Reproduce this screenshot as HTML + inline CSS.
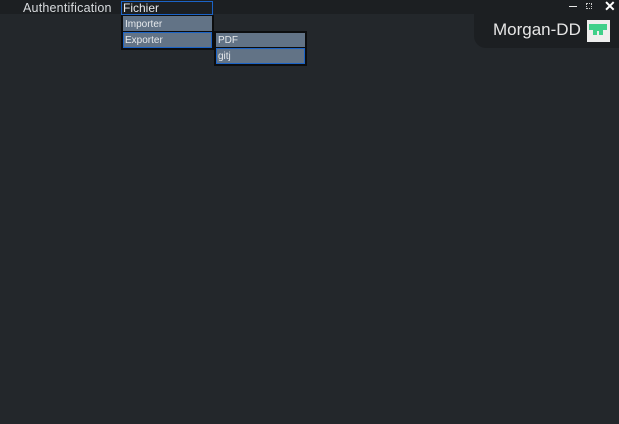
<html><head><style>
body{margin:0;width:619px;height:424px;background:#23272b;font-family:"Liberation Sans",sans-serif;position:relative;overflow:hidden}
.a{position:absolute}
.bar{left:0;top:0;width:619px;height:14px;background:#1c1f22}
.it{position:absolute;background:#627386;color:#e6e9ec;font-size:10px;line-height:17px;padding-left:2px;box-sizing:border-box}
.sel{border:1px solid #1b63c6;line-height:15px;padding-left:1px}
</style></head><body>
<div class="a bar"></div>
<div class="a" style="left:23px;top:1px;font-size:12.5px;line-height:14px;color:#d8dbde;letter-spacing:0.2px">Authentification</div>
<div class="a" style="left:121px;top:1px;width:92px;height:14px;box-sizing:border-box;border:1px solid #1b63c6;color:#e6e9ec;font-size:12px;line-height:12px;padding-left:1px">Fichier</div>
<div class="a" style="left:121px;top:15px;width:93px;height:35px;background:#0c0d0e"></div>
<div class="it" style="left:123px;top:16px;width:89px;height:15px">Importer</div>
<div class="it sel" style="left:123px;top:32px;width:89px;height:16px">Exporter</div>
<div class="a" style="left:214px;top:31px;width:93px;height:35px;background:#0c0d0e"></div>
<div class="it" style="left:216px;top:33px;width:89px;height:14px;line-height:16px">PDF</div>
<div class="it sel" style="left:216px;top:48px;width:89px;height:16px">gitj</div>
<div class="a" style="left:474px;top:10px;width:150px;height:38px;background:#1c1f22;border-bottom-left-radius:12px"></div>
<div class="a" style="left:569px;top:6px;width:8px;height:1px;background:#e8e8e8"></div>
<div class="a" style="left:586px;top:3px;width:6px;height:6px;border:1px dotted #ccc;box-sizing:border-box"></div>
<div class="a" style="left:604px;top:-2px;color:#fff;font-size:14px;font-weight:bold">✕</div>
<div class="a" style="left:493px;top:20px;color:#e6e6e6;font-size:17px">Morgan-DD</div>
<div class="a" style="left:587px;top:20px;width:23px;height:22px;background:#eeeeee"></div>
<svg class="a" style="left:587px;top:20px" width="23" height="22"><path d="M2 4H20V10H16V15H12V11H10V15H6V10H2Z" fill="#3fd08a"/></svg>
</body></html>
